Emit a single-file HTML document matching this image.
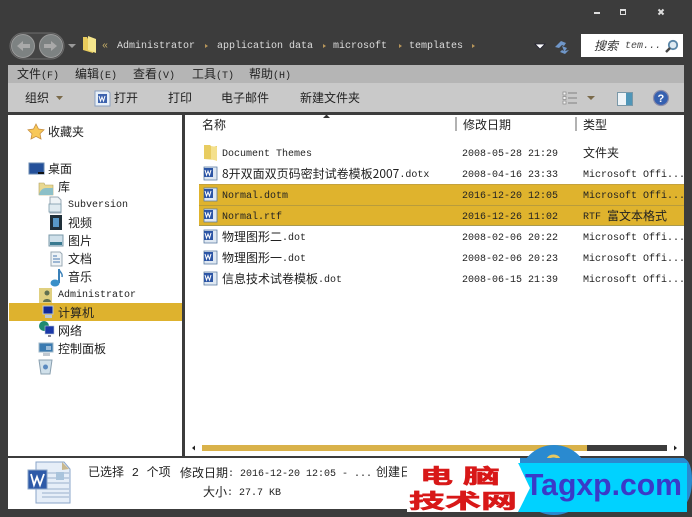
<!DOCTYPE html>
<html><head><meta charset="utf-8">
<style>
html,body{margin:0;padding:0}
body{width:692px;height:517px;overflow:hidden;position:relative;background:#3c3c3c;font-family:"Liberation Mono","WenQuanYi Zen Hei","Noto Sans CJK SC",monospace;font-size:10px;color:#222}
.a{position:absolute}
.t{position:absolute;white-space:nowrap;line-height:14px;height:14px;margin-top:1px}
.t.c{margin-top:0}
.t.mx{margin-top:-2px}
.t.mx .c{position:relative;top:1px}
.c{font-size:12px;font-family:"WenQuanYi Zen Hei","Noto Sans CJK SC",sans-serif}
.m{font-family:"Liberation Mono","WenQuanYi Zen Hei",monospace;font-size:10px}
svg{position:absolute;overflow:visible}
</style></head><body>
<!-- title buttons -->
<div class="a" style="left:594px;top:12px;width:6px;height:2px;background:#ddd"></div>
<div class="a" style="left:620px;top:9px;width:4px;height:3px;border:1px solid #ddd;border-top-width:2px"></div>
<svg style="left:0;top:0" width="692" height="20"><path d="M658.500 9.500l5 5M663.500 9.500l-5 5" stroke="#ddd" stroke-width="2"/></svg>
<!-- nav -->
<svg style="left:0;top:0" width="110" height="65">
<rect x="10" y="33" width="54" height="26" rx="13" fill="#454545" stroke="#6e6e6e"/>
<circle cx="23" cy="46" r="11.500" fill="#7d8282" stroke="#9a9a9a"/>
<circle cx="51" cy="46" r="11.500" fill="#7d8282" stroke="#9a9a9a"/>
<path d="M17 46l6-5v3h7v4h-7v3z" fill="#a9a9a9"/>
<path d="M57 46l-6-5v3h-7v4h7v3z" fill="#a9a9a9"/>
<path d="M68 44h8l-4 4z" fill="#999"/>
<path d="M83 37h4l1 2h7v8l-2 6-10-3z" fill="#e9cc5c"/>
<path d="M88 36l8 3v14l-8-3z" fill="#f4e58c"/>
</svg>
<div class="t" style="left:102px;top:39px;color:#c9b06a">«</div>
<div class="t" style="left:117px;top:39px;color:#ddd">Administrator</div>
<div class="t" style="left:217px;top:39px;color:#ddd">application data</div>
<div class="t" style="left:333px;top:39px;color:#ddd">microsoft</div>
<div class="t" style="left:409px;top:39px;color:#ddd">templates</div>
<svg style="left:0;top:0" width="692" height="65">
<path d="M205 44l3 2-3 2zM323 44l3 2-3 2zM399 44l3 2-3 2zM472 44l3 2-3 2z" fill="#b8965a"/>
<path d="M535 44h10l-5 5z" fill="#fff" stroke="#223" stroke-width=".8"/>
<path d="M555 47l6-6 5 2-2 3-2-1-3 3zM562 46l5 2-2 3 4-1-4 4-5-2 2-2 2 1z" fill="#6f96c8"/>
</svg>
<div class="a" style="left:581px;top:34px;width:102px;height:23px;background:#fff"></div>
<div class="t c" style="left:594px;top:39px;font-style:italic;color:#333">搜索</div>
<div class="t" style="left:625px;top:39px;font-style:italic;color:#444">tem...</div>
<svg style="left:0;top:0" width="692" height="65">
<circle cx="673" cy="45" r="4.200" fill="#dfeaf2" stroke="#5a86a8" stroke-width="1.800"/>
<path d="M670 48l-4 4" stroke="#444" stroke-width="2.400"/>
</svg>
<!-- menu bar -->
<div class="a" style="left:8px;top:65px;width:676px;height:18px;background:#b5b5b5"></div>
<div class="t c" style="left:17px;top:67px">文件<span class="m">(F)</span></div>
<div class="t c" style="left:75px;top:67px">编辑<span class="m">(E)</span></div>
<div class="t c" style="left:133px;top:67px">查看<span class="m">(V)</span></div>
<div class="t c" style="left:192px;top:67px">工具<span class="m">(T)</span></div>
<div class="t c" style="left:249px;top:67px">帮助<span class="m">(H)</span></div>
<!-- toolbar -->
<div class="a" style="left:8px;top:83px;width:676px;height:29px;background:#c9c9c9"></div>
<div class="t c" style="left:25px;top:91px">组织</div>
<div class="t c" style="left:114px;top:91px">打开</div>
<div class="t c" style="left:168px;top:91px">打印</div>
<div class="t c" style="left:221px;top:91px">电子邮件</div>
<div class="t c" style="left:300px;top:91px">新建文件夹</div>
<svg style="left:0;top:0" width="692" height="115">
<path d="M56 96h7l-3.500 4z" fill="#7a6a4a"/>
<path d="M95 91h13l2 2v13H95z" fill="#e8f0f8" stroke="#8aa0c0"/>
<rect x="98" y="94" width="9" height="9" fill="#3d63ae"/>
<path d="M99 96l1.500 5 1.500-4 1.500 4 1.500-5" stroke="#fff" fill="none"/>
<path d="M563 92h3v3h-3zM563 96.500h3v3h-3zM563 101h3v3h-3z" fill="#f3f3f3" stroke="#8a8a8a" stroke-width=".7"/>
<path d="M568 93h9M568 98h9M568 103h9" stroke="#999" stroke-width="1.500"/>
<path d="M587 96h8l-4 4z" fill="#7a6a4a"/>
<rect x="617.500" y="92.500" width="15" height="13" fill="#eef4f8" stroke="#7a98a8"/>
<rect x="626" y="93" width="6" height="12" fill="#4f96b8"/>
<circle cx="661" cy="98" r="7.500" fill="#3560b0" stroke="#8c8ca8" stroke-width="1.200"/>
<text x="657.500" y="102" font-family="Liberation Sans" font-size="11" font-weight="bold" fill="#fff">?</text>
</svg>
<!-- panes -->
<div class="a" style="left:8px;top:115px;width:174px;height:341px;background:#fff"></div>
<div class="a" style="left:185px;top:115px;width:499px;height:341px;background:#fff"></div>
<!-- nav pane -->
<div class="a" style="left:9px;top:303px;width:173px;height:18px;background:#deb22e"></div>
<div class="t c" style="left:48px;top:125px">收藏夹</div>
<div class="t c" style="left:48px;top:162px">桌面</div>
<div class="t c" style="left:58px;top:180px">库</div>
<div class="t" style="left:68px;top:198px">Subversion</div>
<div class="t c" style="left:68px;top:216px">视频</div>
<div class="t c" style="left:68px;top:234px">图片</div>
<div class="t c" style="left:68px;top:252px">文档</div>
<div class="t c" style="left:68px;top:270px">音乐</div>
<div class="t" style="left:58px;top:288px">Administrator</div>
<div class="t c" style="left:58px;top:306px">计算机</div>
<div class="t c" style="left:58px;top:324px">网络</div>
<div class="t c" style="left:58px;top:342px">控制面板</div>
<svg style="left:0;top:0" width="190" height="380">
<path d="M36 124l2.500 5 5.500.8-4 3.900 1 5.300-5-2.600-5 2.600 1-5.300-4-3.900 5.500-.8z" fill="#f8c858" stroke="#c89040" stroke-width=".8"/>
<rect x="29" y="163" width="15" height="11" fill="#24509a" stroke="#6a8ab0"/>
<path d="M38 173h6" stroke="#111" stroke-width="2"/>
<path d="M39 183h5l1 2h8v10H39z" fill="#e8d890" stroke="#b0a060" stroke-width=".6"/>
<path d="M39 195c1-5 4-7 7-7h7v7z" fill="#8cc0c8"/>
<path d="M50 197h8l3 3v13H50z" fill="#eef3f6" stroke="#9aa8b4"/>
<rect x="49" y="204" width="12" height="8" fill="#dfeaf0" stroke="#7a98a8" stroke-width=".8"/>
<rect x="50" y="215" width="12" height="15" fill="#20303a"/>
<rect x="53" y="218" width="6" height="9" fill="#5898c8"/>
<rect x="49" y="235" width="14" height="11" fill="#cfe0ea" stroke="#7a98a8"/>
<path d="M50 242h12v3H50z" fill="#3a7a90"/>
<path d="M51 252h9l2 2v12H51z" fill="#eef3f6" stroke="#9aa8b4"/>
<path d="M53 256h4M53 259h7M53 262h7" stroke="#4a7ab0"/>
<path d="M59 269v14" stroke="#3a80b8" stroke-width="2"/>
<path d="M59 269c1 4 4 4 3 8" stroke="#3a80b8" fill="none" stroke-width="1.500"/>
<ellipse cx="55" cy="283" rx="4.500" ry="3.500" fill="#3a90c8"/>
<path d="M39 288h13v15H39z" fill="#e0d080"/>
<circle cx="47" cy="293" r="2.500" fill="#607050"/>
<path d="M43 302c0-4 8-4 8 0z" fill="#607050"/>
<rect x="43" y="306" width="10" height="8" fill="#102a9a" stroke="#bcc8d4"/>
<path d="M45 315h7v3h-7z" fill="#bcc8d4"/>
<circle cx="44" cy="326" r="5" fill="#208a70"/>
<rect x="45" y="326" width="9" height="8" fill="#1a38a8" stroke="#bcc8d4" stroke-width=".6"/>
<path d="M48 335h3v2h-3z" fill="#889"/>
<rect x="39" y="343" width="14" height="9" fill="#3a7ab0" stroke="#a0b8c8"/>
<path d="M46 347h5M46 349h5" stroke="#fff"/>
<path d="M43 353h7v3h-7z" fill="#c0c8d0"/>
<path d="M39 360h13l-2 14h-9z" fill="#d0e0ea" stroke="#8aa0b0"/>
<circle cx="45.500" cy="367" r="2.500" fill="#5a8ac0"/>
</svg>
<!-- headers -->
<svg style="left:0;top:0" width="692" height="135">
<path d="M323 118h7l-3.500-3.500z" fill="#333"/>
<path d="M456 117v14M576 117v14" stroke="#666" stroke-width="1"/>
</svg>
<div class="t c" style="left:202px;top:118px">名称</div>
<div class="t c" style="left:463px;top:118px">修改日期</div>
<div class="t c" style="left:583px;top:118px">类型</div>
<!-- selected rows -->
<div class="a" style="left:199px;top:184px;width:485px;height:42px;background:#dfb32d;border-top:1px solid #c4a23c;border-bottom:1px solid #a89a50;box-sizing:border-box"></div>
<div class="a" style="left:199px;top:205px;width:485px;height:1px;background:#b89c3c"></div>
<!-- rows -->
<div class="t" style="left:222px;top:147px">Document Themes</div>
<div class="t mx" style="left:222px;top:168px"><span class="c">8开双面双页码密封试卷模板2007</span>.dotx</div>
<div class="t" style="left:222px;top:189px">Normal.dotm</div>
<div class="t" style="left:222px;top:210px">Normal.rtf</div>
<div class="t mx" style="left:222px;top:231px"><span class="c">物理图形二</span>.dot</div>
<div class="t mx" style="left:222px;top:252px"><span class="c">物理图形一</span>.dot</div>
<div class="t mx" style="left:222px;top:273px"><span class="c">信息技术试卷模板</span>.dot</div>

<div class="t" style="left:462px;top:147px">2008-05-28 21:29</div>
<div class="t" style="left:462px;top:168px">2008-04-16 23:33</div>
<div class="t" style="left:462px;top:189px">2016-12-20 12:05</div>
<div class="t" style="left:462px;top:210px">2016-12-26 11:02</div>
<div class="t" style="left:462px;top:231px">2008-02-06 20:22</div>
<div class="t" style="left:462px;top:252px">2008-02-06 20:23</div>
<div class="t" style="left:462px;top:273px">2008-06-15 21:39</div>

<div class="t c" style="left:583px;top:146px">文件夹</div>
<div class="t" style="left:583px;top:168px">Microsoft Offi...</div>
<div class="t" style="left:583px;top:189px">Microsoft Offi...</div>
<div class="t mx" style="left:583px;top:210px">RTF <span class="c">富文本格式</span></div>
<div class="t" style="left:583px;top:231px">Microsoft Offi...</div>
<div class="t" style="left:583px;top:252px">Microsoft Offi...</div>
<div class="t" style="left:583px;top:273px">Microsoft Offi...</div>
<svg style="left:0;top:0" width="240" height="295">
<path d="M204 145h6l2 2 5-1v14l-13-1z" fill="#e8cc60"/>
<path d="M211 146l6 1v14l-6-2z" fill="#f4e08c"/>
<g fill="#dfe8f2" stroke="#5a7aa0" stroke-width=".8">
<path d="M204 167h13v13h-13z"/><path d="M204 188h13v13h-13z"/><path d="M204 209h13v13h-13z"/><path d="M204 230h13v13h-13z"/><path d="M204 251h13v13h-13z"/><path d="M204 272h13v13h-13z"/>
</g>
<g fill="#2c55a5">
<rect x="204" y="168" width="9" height="9"/><rect x="204" y="189" width="9" height="9"/><rect x="204" y="210" width="9" height="9"/><rect x="204" y="231" width="9" height="9"/><rect x="204" y="252" width="9" height="9"/><rect x="204" y="273" width="9" height="9"/>
</g>
<g fill="none" stroke="#fff" stroke-width="1">
<path d="M205 170l1.500 5 1.500-4 1.500 4 1.500-5"/><path d="M205 191l1.500 5 1.500-4 1.500 4 1.500-5"/><path d="M205 212l1.500 5 1.500-4 1.500 4 1.500-5"/><path d="M205 233l1.500 5 1.500-4 1.500 4 1.500-5"/><path d="M205 254l1.500 5 1.500-4 1.500 4 1.500-5"/><path d="M205 275l1.500 5 1.500-4 1.500 4 1.500-5"/>
</g>
</svg>
<!-- scrollbar -->
<div class="a" style="left:202px;top:445px;width:386px;height:6px;background:#d9b24a"></div>
<div class="a" style="left:587px;top:445px;width:80px;height:6px;background:#3c3c3c"></div>
<svg style="left:0;top:0" width="692" height="460">
<path d="M192 448l3-2.500v5z" fill="#222"/>
<path d="M674 445.500l3 2.500-3 2.500z" fill="#222"/>
</svg>
<!-- status bar -->
<div class="a" style="left:8px;top:458px;width:676px;height:51px;background:#fff"></div>
<svg style="left:0;top:0" width="80" height="517">
<path d="M36 462h28l6 7v34H36z" fill="#e6eef8" stroke="#8aa4c8"/>
<path d="M62 462l7 7-7 1z" fill="#c8b890"/>
<path d="M47 473h22M47 478h22M47 483h22M42 489h27M42 493h27M42 497h27" stroke="#9ab0cc"/>
<rect x="28" y="470" width="19" height="19" fill="#2e5aa8" stroke="#8aa4c8"/>
<path d="M31 474l3 11 3-8 3 8 4-11" fill="none" stroke="#fff" stroke-width="1.800"/>
<rect x="56" y="472" width="8" height="8" fill="#aac4dc"/>
</svg>
<div class="t c" style="left:88px;top:465px;word-spacing:5px">已选择 <span class="m" style="font-size:12px">2</span> 个项</div>
<div class="t mx" style="left:180px;top:467px"><span class="c">修改日期</span>: 2016-12-20 12:05 - ...</div>
<div class="t c" style="left:376px;top:465px">创建日</div>
<div class="t mx" style="left:203px;top:486px"><span class="c">大小</span>: 27.7 KB</div>
<!-- watermark -->
<svg style="left:0;top:0" width="692" height="517">
<circle cx="554" cy="480" r="35" fill="#2a8ad0"/>
<path d="M548 459a6 5 0 0 1 11 0v4h-11z" fill="none" stroke="#e8c860" stroke-width="3"/>
<rect x="407" y="459" width="111" height="53" fill="#fff"/>
<path d="M518 458H684Q692 462 692 480Q692 498 684 506V458Z" fill="#2a8ad0"/>
<path d="M520 458H684V463H520Z" fill="#2a8ad0"/>
<path d="M518 463H687V512H518L530 488Z" fill="#00d2ff"/>
<path d="M518 463L530 488L518 512H514V463Z" fill="#fff"/>
<text x="525" y="495" font-family="Liberation Sans" font-size="31" font-weight="bold" fill="#3a3ac8" textLength="157" lengthAdjust="spacingAndGlyphs">Tagxp.com</text>
<g font-family="WenQuanYi Zen Hei,Noto Sans CJK SC,sans-serif" font-weight="bold" fill="#d81818" stroke="#d81818" stroke-width=".6">
<text x="420" y="483" font-size="20" textLength="33" lengthAdjust="spacingAndGlyphs">电</text>
<text x="463" y="483" font-size="20" textLength="37" lengthAdjust="spacingAndGlyphs">脑</text>
<text x="409" y="508" font-size="20" textLength="108" lengthAdjust="spacingAndGlyphs">技术网</text>
</g>
</svg>
</body></html>
